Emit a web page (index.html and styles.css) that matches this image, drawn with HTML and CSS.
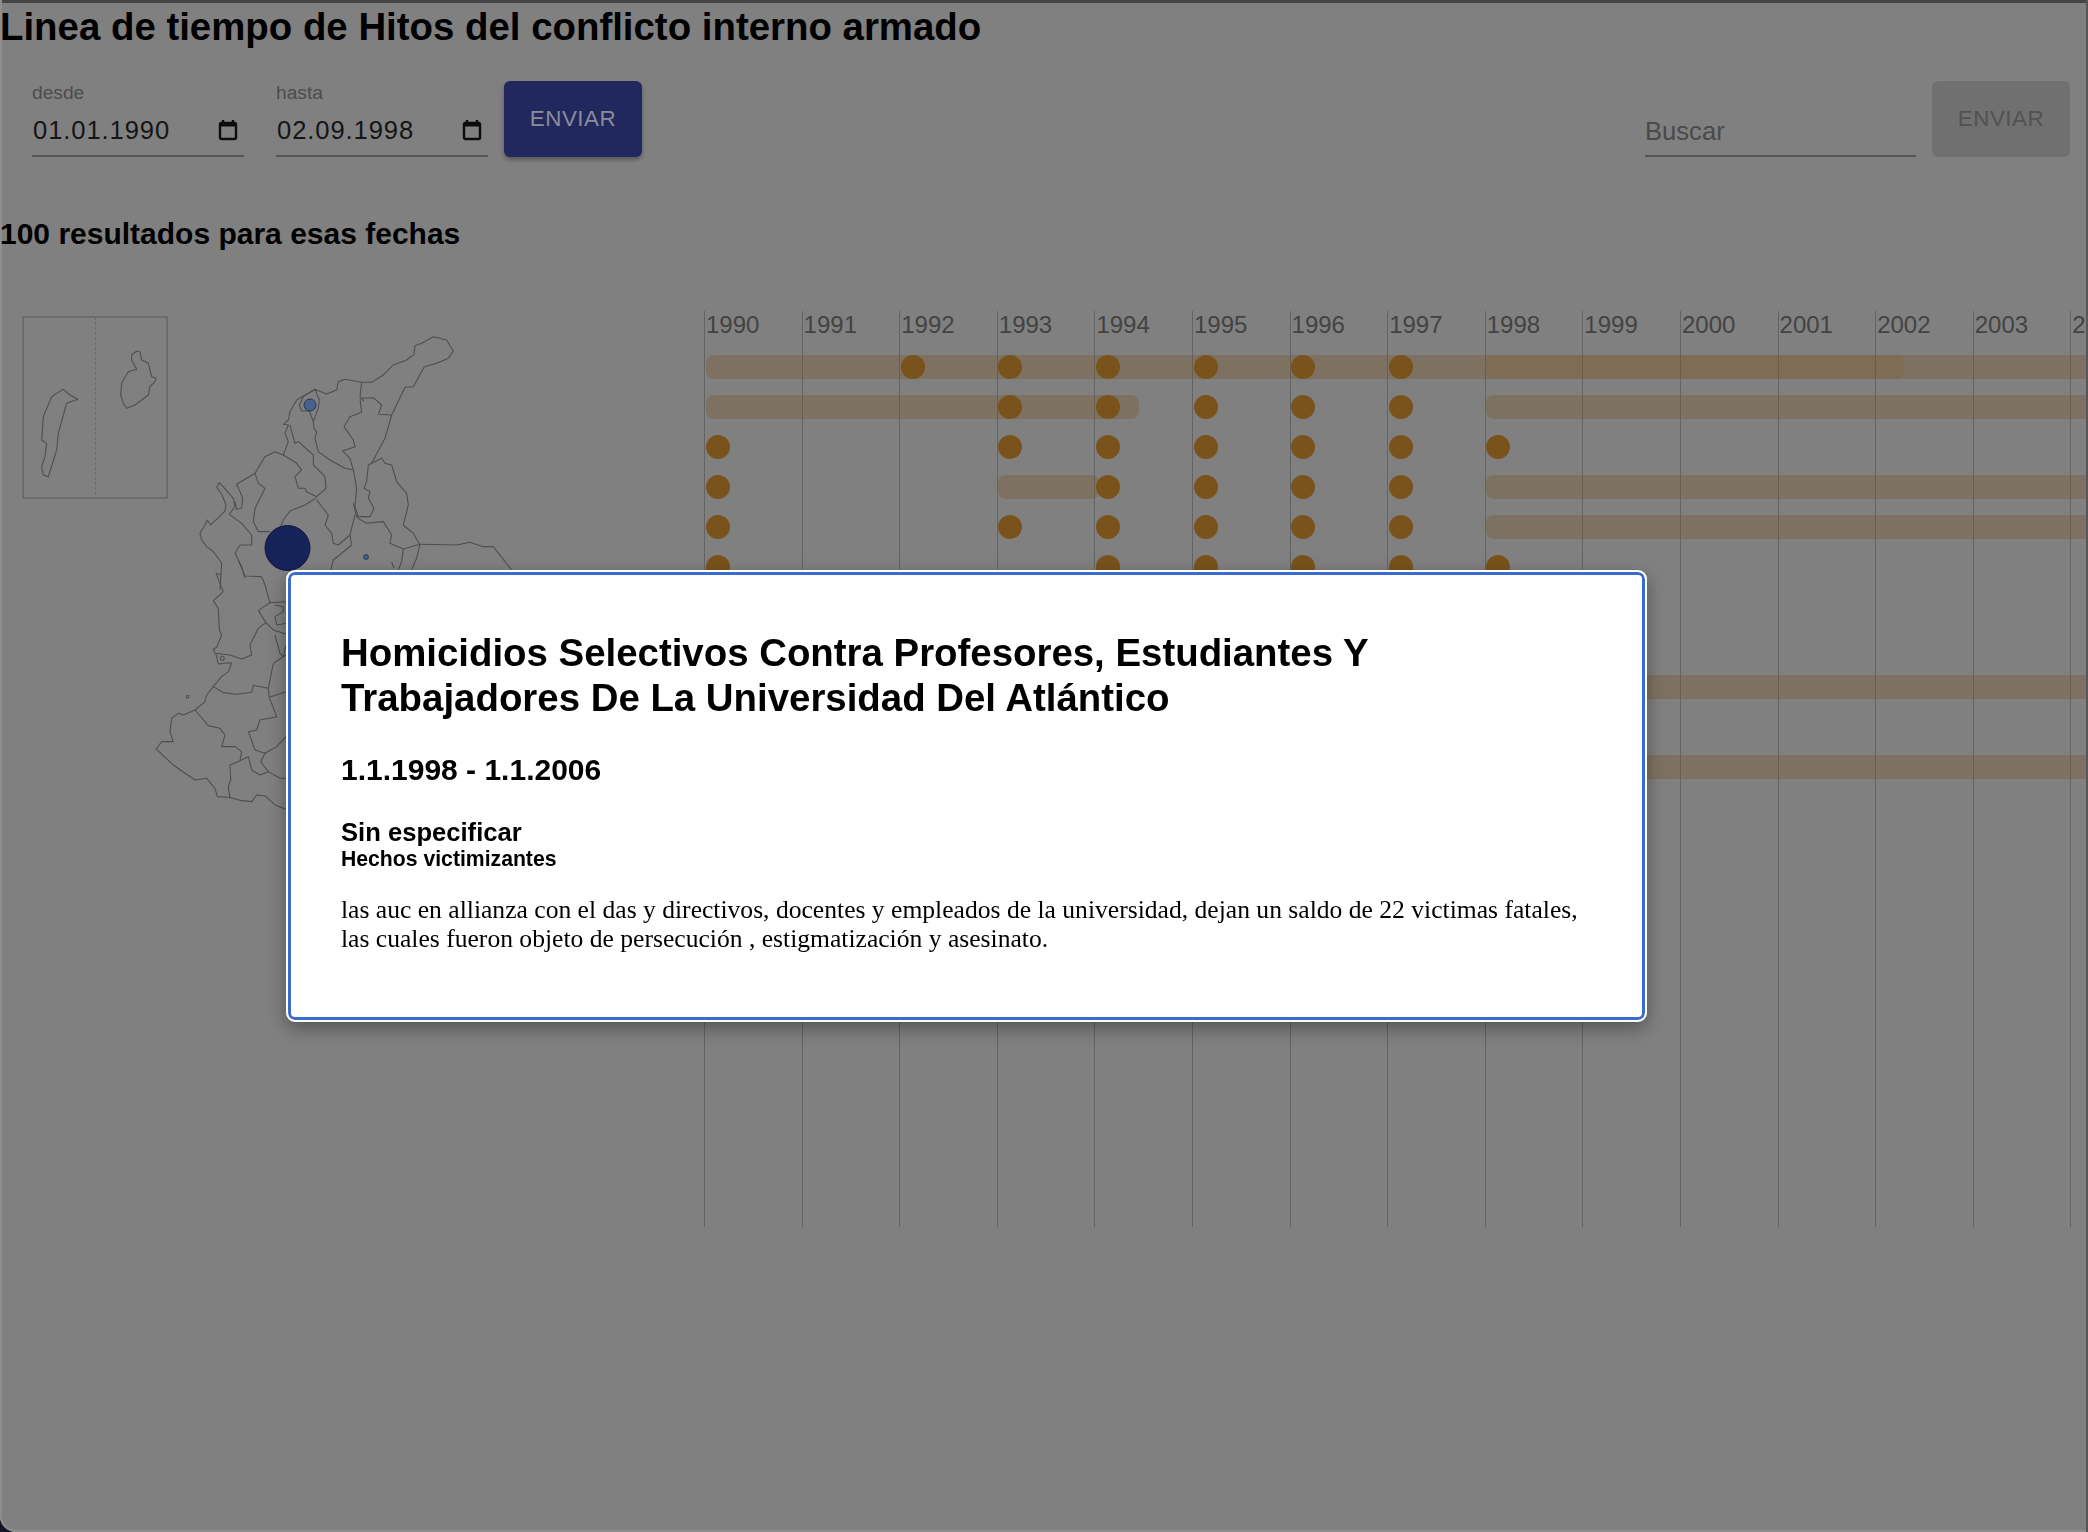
FILE: index.html
```html
<!DOCTYPE html>
<html>
<head>
    <title>Linea de tiempo de Hitos</title>
    <link rel="stylesheet" href="styles.css">
</head>
<body>
<div class="window">
    <h1>Linea de tiempo de Hitos del conflicto interno armado</h1>

    <section class="controls">
        <div class="control-group">
            <div class="date-field">
                <span class="field-label">desde</span>
                <div class="field-value">01.01.1990
                    <svg class="cal-icon" viewBox="0 0 20 22"><path d="M5 1v3M15 1v3" /><rect x="2" y="4" width="16" height="16" rx="1.5" /><path class="cal-head" d="M2 4h16v3.5H2z" /></svg>
                </div>
            </div>
            <div class="date-field">
                <span class="field-label">hasta</span>
                <div class="field-value">02.09.1998
                    <svg class="cal-icon" viewBox="0 0 20 22"><path d="M5 1v3M15 1v3" /><rect x="2" y="4" width="16" height="16" rx="1.5" /><path class="cal-head" d="M2 4h16v3.5H2z" /></svg>
                </div>
            </div>
            <button class="btn">ENVIAR</button>
        </div>
        <div class="control-group">
            <div class="search-field">Buscar</div>
            <button class="btn btn-disabled">ENVIAR</button>
        </div>
    </section>

    <h3 class="results">100 resultados para esas fechas</h3>

    <section class="main">
        <svg class="map" viewBox="0 300 520 520">
            <!-- islands -->
            <rect class="inset" x="23" y="317" width="144" height="181" />
            <path class="inset-split" d="M95.5 317V498" />
            <g transform="translate(0 300) scale(.3333)">
                <path d="M395 165 410 153 420 155 425 180 445 190 455 230 468 235 465 245 450 260 445 285 405 315 380 325 370 310 362 285 365 250 385 215 410 208 395 180Z" />
                <path d="M190 268 210 285 233 298 200 310 190 345 175 400 170 450 145 530 130 525 125 500 135 470 140 430 125 420 130 350 155 290Z" />
            </g>
            <!-- north -->
            <g transform="translate(190 325) scale(.3333)">
                <path d="M90 795 95 715 85 700 70 680 50 665 35 645 30 625 45 600 52 585 62 600 72 590 85 578 105 558 108 540 95 507 80 487 88 473 108 495 130 520 135 545 118 568" />
                <path d="M135 530 140 553 155 550 158 520 150 500 140 478 195 445 225 395 255 380 280 390 295 350 285 325 295 300 280 298 295 285 300 260 320 225 375 193 410 207 440 195 445 170 465 163 515 172 545 172 580 150 610 120 650 105 672 88 675 62 695 55 730 35 770 45 790 78 775 100 740 115 703 125 670 185 645 187 605 270 585 340 545 415" />
                <path d="M375 193 388 225 385 250 370 290 358 258 335 258 328 240 340 215Z" />
                <path d="M370 290 372 310 380 320 375 340 385 380 420 405 465 430 490 435" />
                <path d="M515 172 510 215 520 228 515 220 550 218 575 240 565 268 605 270" />
                <path d="M510 222 515 262 480 275 462 305 490 345 495 365 458 378 480 400 490 435 500 490 495 545 505 575" />
                <path d="M280 390 320 415 335 435 315 455 325 490 345 490 350 500 380 515 408 490 405 455 370 420 370 390 325 350 315 355 305 320 300 300" />
                <path d="M195 445 205 475 225 490 195 550 190 590 205 620 240 620" />
                <path d="M380 518 345 540 300 558 280 585 270 610" />
                <path d="M380 525 415 570 405 600 425 625 430 655 445 660 480 630 495 570" />
                <path d="M545 415 535 420 530 470 522 490 540 500 535 520 552 550 540 575 500 575 490 535" />
                <path d="M545 415 575 400 585 415 605 420 620 470 650 505 655 540 640 600 670 625 690 660" />
                <path d="M500 578 530 595 580 590 605 630 600 655 640 672 690 658 680 700 660 745" />
                <path d="M690 658 800 660 840 652 880 665 910 665 965 735" />
                <path d="M640 672 635 710 625 735 M605 712 612 730" />
                <path d="M480 630 485 660 430 705 420 745" />
                <path d="M118 568 155 595 185 630 185 660 150 660 135 685 155 725 165 760" />
            </g>
            <!-- south -->
            <g transform="translate(140 560) scale(.3333)">
                <path d="M243 45 228 40 250 95 220 122 235 145 238 210 245 225 230 262 220 268 225 280 270 285 305 297 335 285 330 255 355 205 378 188" />
                <path d="M295 0 315 48 365 50 375 75 390 128 355 152 378 188 400 210 438 222" />
                <path d="M228 283 235 312 265 308 275 310 265 335 245 350 220 380 250 398 290 403 335 397 340 376 385 385 388 412 438 395" />
                <path d="M385 385 400 310 438 285" />
                <path d="M220 380 200 405 195 425 165 450 130 465 115 460 95 475 90 515 100 545 65 545 48 567 100 615 165 660 200 655 225 685 232 710 268 712 305 722 335 725 350 705 375 708 405 735 438 748" />
                <path d="M165 450 205 497 240 505 255 525 245 560 285 560 305 575 300 602 270 615 272 660 265 680 270 715" />
                <path d="M300 602 325 590 335 630 360 645 385 635 420 655 438 655" />
                <path d="M388 412 410 470 360 480 350 510 325 515 345 570 375 580 362 605 385 635" />
                <path d="M375 580 410 560 438 530" />
                <path d="M390 128 438 125 M405 135 430 140 430 155 405 170 410 195 440 190 M405 225 420 280 430 290 438 255" />
                <circle cx="247" cy="295" r="6" />
                <circle cx="143" cy="410" r="4" />
            </g>
            <circle class="point-big" cx="287.5" cy="548" r="22.5" />
            <circle class="point-mid" cx="310" cy="405" r="6" />
            <circle class="point-small" cx="366" cy="557" r="2.4" />
        </svg>

        <div class="timeline" id="timeline">
            <div class="years" id="years"></div>
            <div class="rows" id="rows"></div>
        </div>
    </section>
</div>

<div class="modal">
    <h2>Homicidios Selectivos Contra Profesores, Estudiantes Y Trabajadores De La Universidad Del Atlántico</h2>
    <h3>1.1.1998 - 1.1.2006</h3>
    <h4>Sin especificar</h4>
    <h5>Hechos victimizantes</h5>
    <p>las auc en allianza con el das y directivos, docentes y empleados de la universidad, dejan un saldo de 22 victimas fatales, las cuales fueron objeto de persecución , estigmatización y asesinato.</p>
</div>

<script src="script.js"></script>
</body>
</html>
```

FILE: styles.css
```css
html {
    background-color: #14142a;
}
body {
    margin: 0;
    font-family: "Liberation Sans", Arial, sans-serif;
    color: #000;
}
.window {
    box-sizing: border-box;
    height: 1532px;
    overflow: hidden;
    background-color: #808080;
    border-radius: 0 0 0 16px;
    box-shadow: inset 2px 0 #8e8e8e, inset -2px 0 #565656, inset 0 3px #444, inset 0 -2px #8e8e8e;
}
h1 {
    margin: 0;
    padding-top: 5px;
    font-size: 38.4px;
    line-height: 43px;
}
.controls {
    display: flex;
    justify-content: space-between;
    margin-top: 33px;
    padding: 0 18px 0 32px;
}
.control-group {
    display: flex;
    align-items: stretch;
    gap: 16px;
}
.date-field {
    display: flex;
    flex-direction: column;
    justify-content: flex-end;
    width: 212px;
    margin-right: 16px;
}
.date-field + .btn {
    margin-left: -16px;
}
.field-label {
    margin-bottom: 6px;
    font-size: 19.2px;
    line-height: 22px;
    color: #4c4c4c;
}
.field-value {
    display: flex;
    justify-content: space-between;
    align-items: center;
    height: 40px;
    padding: 0 6px 5px 1px;
    font-size: 25.6px;
    letter-spacing: .9px;
    color: #151515;
    border-bottom: 2px solid #555;
}
.cal-icon {
    width: 20px;
    height: 22px;
    fill: none;
    stroke: #0c0c0c;
    stroke-width: 2.4;
}
.cal-head {
    fill: #0c0c0c;
    stroke: none;
}
.search-field {
    box-sizing: border-box;
    align-self: flex-end;
    width: 271px;
    height: 47px;
    padding-top: 6px;
    font-size: 25.6px;
    line-height: 30px;
    color: #4a4a4a;
    border-bottom: 2px solid #555;
}
.btn {
    width: 138px;
    height: 76px;
    padding: 0;
    border: 0;
    border-radius: 6px;
    background-color: #20285e;
    color: #8b8b9a;
    font-family: inherit;
    font-size: 22.4px;
    letter-spacing: .5px;
    box-shadow: 0 3px 4px rgba(0, 0, 0, .3);
}
.btn-disabled {
    background-color: #707070;
    color: #525252;
    box-shadow: none;
}
.results {
    margin: 60px 0 0;
    font-size: 30px;
    line-height: 34px;
}
.main {
    display: flex;
    margin-top: 49px;
}
.map {
    flex: none;
    display: block;
    width: 520px;
    height: 520px;
    fill: none;
    stroke: #4e4e4e;
    stroke-width: 1;
    overflow: visible;
}
.map g {
    stroke-width: 3.2;
    stroke-linejoin: round;
}
.inset {
    stroke: #585858;
}
.inset-split {
    stroke: #6c6c6c;
    stroke-dasharray: 3 2;
}
.point-big {
    fill: #15235a;
    stroke: #10193f;
}
.point-mid, .point-small {
    fill: #466390;
    stroke: #273650;
}
.timeline {
    position: relative;
    flex: none;
    width: 1382px;
    height: 916px;
    margin: 11px 0 0 184px;
    overflow: hidden;
}
.years {
    position: absolute;
    top: 0;
    left: 0;
    bottom: 0;
    display: flex;
}
.year {
    box-sizing: border-box;
    flex: none;
    width: 97.6px;
    padding-left: 1px;
    font-size: 24px;
    line-height: 28px;
    color: #434343;
    border-left: 1px solid #636363;
}
.rows {
    position: relative;
    padding-top: 44px;
}
.row {
    position: relative;
    height: 24px;
    margin-bottom: 16px;
}
.bar {
    position: absolute;
    top: 0;
    height: 24px;
    border-radius: 8px;
    background-color: rgba(118, 85, 35, .33);
}
.bar-over {
    background-color: rgba(128, 90, 30, .2);
}
.dot {
    position: absolute;
    top: 0;
    width: 24px;
    height: 24px;
    border-radius: 50%;
    background-color: #79531b;
}
.modal {
    position: fixed;
    left: 286px;
    top: 570px;
    box-sizing: border-box;
    width: 1361px;
    height: 452px;
    padding: 58px 53px 0;
    background-color: #fff;
    border: 2px solid #fff;
    border-radius: 9px;
    box-shadow: inset 0 0 0 3px #3a6ccd, 0 6px 18px rgba(0, 0, 0, .35);
}
.modal h2 {
    margin: 0;
    font-size: 38.4px;
    line-height: 45px;
}
.modal h3 {
    margin: 33px 0 0;
    font-size: 30px;
    line-height: 34px;
}
.modal h4 {
    margin: 31px 0 0;
    font-size: 25.6px;
    line-height: 28px;
}
.modal h5 {
    margin: 1px 0 0;
    font-size: 21.2px;
    line-height: 23px;
}
.modal p {
    margin: 25px 0 0;
    font-family: "Liberation Serif", "Times New Roman", serif;
    font-size: 25.6px;
    line-height: 29px;
}
```

FILE: script.js
```js
var COL = 97.6;

// each row: dots are years, bars are [from, to, extra class]
var data = [
    { bars: [[1990, 2010], [1998, 2002.28, "bar-over"]], dots: [1992, 1993, 1994, 1995, 1996, 1997] },
    { bars: [[1990, 1994.44], [1998, 2010]], dots: [1993, 1994, 1995, 1996, 1997] },
    { bars: [], dots: [1990, 1993, 1994, 1995, 1996, 1997, 1998] },
    { bars: [[1993, 1994.03], [1998, 2010]], dots: [1990, 1994, 1995, 1996, 1997] },
    { bars: [[1998, 2010]], dots: [1990, 1993, 1994, 1995, 1996, 1997] },
    { bars: [], dots: [1990, 1994, 1995, 1996, 1997, 1998] },
    { bars: [], dots: [] },
    { bars: [], dots: [] },
    { bars: [[1998, 2010]], dots: [] },
    { bars: [], dots: [] },
    { bars: [[1998, 2010]], dots: [] }
];

function xFor(year) {
    return (year - 1990) * COL + 1.5;
}

var years = document.getElementById("years");
for (var y = 1990; y <= 2004; y++) {
    var el = document.createElement("div");
    el.className = "year";
    el.innerHTML = y;
    years.appendChild(el);
}

var rows = document.getElementById("rows");
data.forEach(function (row) {
    var rowEl = document.createElement("div");
    rowEl.className = "row";
    row.bars.forEach(function (b) {
        var bar = document.createElement("div");
        bar.className = b[2] ? "bar " + b[2] : "bar";
        bar.style.left = xFor(b[0]) + "px";
        bar.style.width = (b[1] - b[0]) * COL + "px";
        rowEl.appendChild(bar);
    });
    row.dots.forEach(function (d) {
        var dot = document.createElement("div");
        dot.className = "dot";
        dot.style.left = xFor(d) + "px";
        rowEl.appendChild(dot);
    });
    rows.appendChild(rowEl);
});
```
